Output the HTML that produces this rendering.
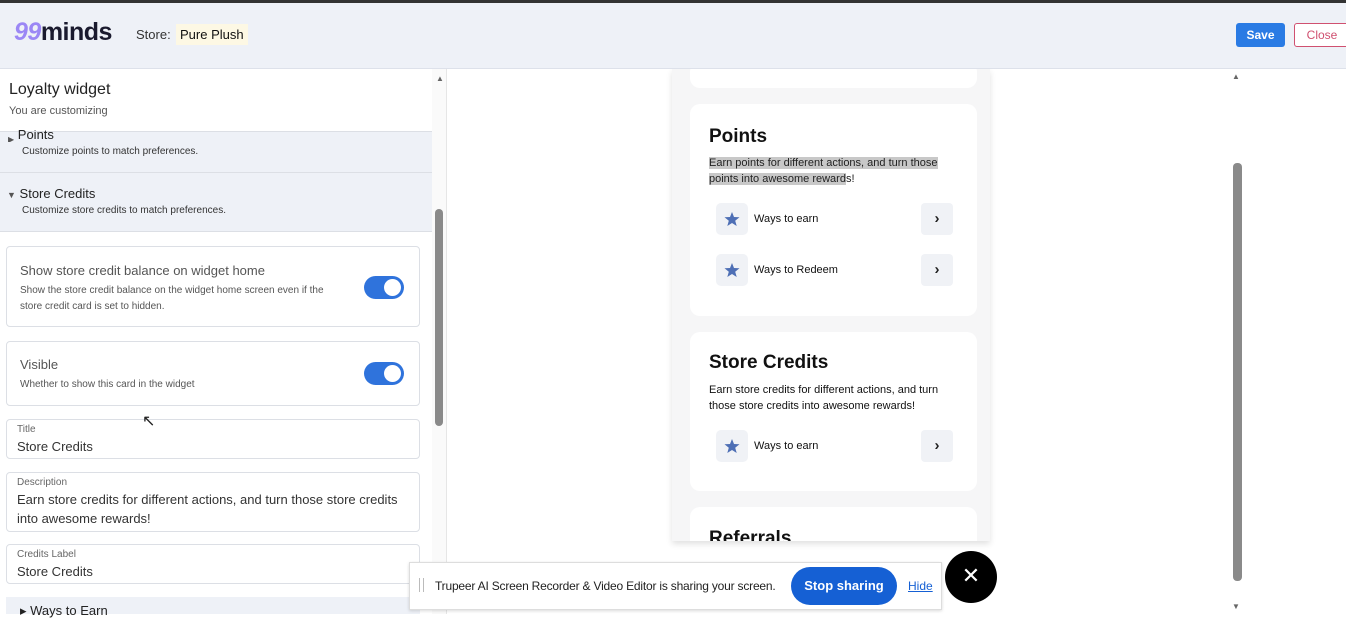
<!DOCTYPE html>
<html><head><meta charset="utf-8"><style>
*{box-sizing:border-box;margin:0;padding:0}
body{width:1346px;height:614px;overflow:hidden;background:#fff;font-family:"Liberation Sans",sans-serif;position:relative;color:#222}
.a{position:absolute}
.hdr{left:0;top:0;width:1346px;height:69px;background:#eef1f7;border-top:3px solid #333;border-bottom:1px solid #dde1ea}
.card{position:absolute;left:6px;width:414px;border:1px solid #dcdfe5;border-radius:4px;background:#fff}
.tog{position:absolute;width:40px;height:23px;border-radius:12px;background:#2f73dc}
.tog:after{content:"";position:absolute;right:3px;top:3px;width:17px;height:17px;border-radius:50%;background:#fff}
.lbl{font-size:10px;color:#666;position:absolute;left:10px}
.val{font-size:13px;color:#333;position:absolute;left:10px}
.wc{position:absolute;left:690px;width:287px;background:#fff;border-radius:10px}
.row{position:absolute;left:26px;width:237px;height:32px}
.ico{position:absolute;left:0;top:0;width:32px;height:32px;background:#f0f2f6;border-radius:5px}
.chev{position:absolute;right:0;top:0;width:32px;height:32px;background:#f0f2f6;border-radius:4px;font-size:15px;text-align:center;line-height:31px;font-weight:bold}
.rt{position:absolute;left:38px;top:10px;font-size:11px;color:#111}
</style></head><body>

<!-- widget preview -->
<div class="a" style="left:672px;top:69px;width:318px;height:472px;background:#f6f6f7;box-shadow:0 3px 6px rgba(0,0,0,.12)"></div>
<div class="wc" style="top:62px;height:26px"></div>
<div class="wc" style="top:104px;height:212px">
 <div class="a" style="left:19px;top:22px;font-size:19px;font-weight:bold;color:#111">Points</div>
 <div class="a" style="left:19px;top:51px;font-size:11px;line-height:16px;color:#222;width:240px"><span style="background:#c8c8c8">Earn points for different actions, and turn those points into awesome reward</span>s!</div>
 <div class="row" style="top:99px"><div class="ico"><svg width="32" height="32"><polygon points="16,9 18,14 23.5,14.3 19.2,17.7 20.7,23 16,20 11.3,23 12.8,17.7 8.5,14.3 14,14" fill="#4e6fb5"/></svg></div><div class="rt">Ways to earn</div><div class="chev">›</div></div>
 <div class="row" style="top:150px"><div class="ico"><svg width="32" height="32"><polygon points="16,9 18,14 23.5,14.3 19.2,17.7 20.7,23 16,20 11.3,23 12.8,17.7 8.5,14.3 14,14" fill="#4e6fb5"/></svg></div><div class="rt">Ways to Redeem</div><div class="chev">›</div></div>
</div>
<div class="wc" style="top:332px;height:159px">
 <div class="a" style="left:19px;top:20px;font-size:19px;font-weight:bold;color:#111">Store Credits</div>
 <div class="a" style="left:19px;top:50px;font-size:11px;line-height:16px;color:#111;width:240px">Earn store credits for different actions, and turn those store credits into awesome rewards!</div>
 <div class="row" style="top:98px"><div class="ico"><svg width="32" height="32"><polygon points="16,9 18,14 23.5,14.3 19.2,17.7 20.7,23 16,20 11.3,23 12.8,17.7 8.5,14.3 14,14" fill="#4e6fb5"/></svg></div><div class="rt">Ways to earn</div><div class="chev">›</div></div>
</div>
<div class="wc" style="top:507px;height:34px;border-radius:10px 10px 0 0;overflow:hidden"><div class="a" style="left:19px;top:21px;font-size:19px;font-weight:bold;color:#111">Referrals</div></div>

<div class="a hdr"></div>
<div class="a" style="left:14px;top:18px;font-size:25px;font-weight:bold;letter-spacing:-0.5px"><span style="color:#9b87f5;font-style:italic">99</span><span style="color:#1a1a2e">minds</span></div>
<div class="a" style="left:136px;top:27px;font-size:13px;color:#333">Store:</div>
<div class="a" style="left:176px;top:24px;padding:3px 4px;background:#fdf8e4;font-size:13px;color:#111">Pure Plush</div>
<div class="a" style="left:1236px;top:23px;width:49px;height:24px;background:#2a7be4;border-radius:3px;color:#fff;font-size:12px;font-weight:bold;text-align:center;line-height:24px">Save</div>
<div class="a" style="left:1294px;top:23px;width:56px;height:24px;border:1px solid #d05070;border-radius:3px;color:#d05070;font-size:12px;text-align:center;line-height:22px;background:#fff">Close</div>

<!-- left panel -->
<div class="a" style="left:0;top:69px;width:432px;height:545px;background:#fff"></div>
<div class="a" style="left:0;top:132px;width:432px;height:100px;background:#eef1f7"></div>
<div class="a" style="left:0;top:172px;width:432px;height:1px;background:#dcdfe5"></div>
<div class="a" style="left:0;top:231px;width:432px;height:1px;background:#dcdfe5"></div>
<div class="a" style="left:0;top:69px;width:432px;height:63px;background:#fff;border-bottom:1px solid #dcdfe5"></div>
<div class="a" style="left:9px;top:81px;font-size:16px;color:#222">Loyalty widget</div>
<div class="a" style="left:9px;top:105px;font-size:11px;color:#555">You are customizing</div>
<div class="a" style="left:8px;top:130px;height:12px;overflow:hidden;width:200px;font-size:13px;color:#222"><span style="font-size:8px;color:#555">▶</span> <span style="position:relative;top:-3px">Points</span></div>
<div class="a" style="left:22px;top:146px;font-size:10px;color:#333">Customize points to match preferences.</div>
<div class="a" style="left:7px;top:186px;font-size:13px;color:#222"><span style="font-size:9px;color:#555">▼</span> Store Credits</div>
<div class="a" style="left:22px;top:205px;font-size:10px;color:#333">Customize store credits to match preferences.</div>

<div class="card" style="top:246px;height:81px">
 <div class="a" style="left:13px;top:16px;font-size:13px;color:#555">Show store credit balance on widget home</div>
 <div class="a" style="left:13px;top:36px;font-size:10px;color:#555;line-height:16px;width:325px">Show the store credit balance on the widget home screen even if the store credit card is set to hidden.</div>
 <div class="tog" style="left:357px;top:29px"></div>
</div>
<div class="card" style="top:341px;height:65px">
 <div class="a" style="left:13px;top:15px;font-size:13px;color:#555">Visible</div>
 <div class="a" style="left:13px;top:37px;font-size:10px;color:#555">Whether to show this card in the widget</div>
 <div class="tog" style="left:357px;top:20px"></div>
</div>
<div class="card" style="top:419px;height:40px"><div class="lbl" style="top:4px">Title</div><div class="val" style="top:19px">Store Credits</div></div>
<div class="card" style="top:472px;height:60px"><div class="lbl" style="top:4px">Description</div><div class="val" style="top:17px;line-height:19px;width:390px">Earn store credits for different actions, and turn those store credits into awesome rewards!</div></div>
<div class="card" style="top:544px;height:40px"><div class="lbl" style="top:4px">Credits Label</div><div class="val" style="top:19px">Store Credits</div></div>
<div class="a" style="left:6px;top:597px;width:414px;height:17px;background:#eef1f7"></div>
<div class="a" style="left:20px;top:603px;font-size:13px;color:#222">▸ Ways to Earn</div>
<div class="a" style="left:142px;top:411px;font-size:16px">↖</div>

<!-- left scrollbar -->
<div class="a" style="left:432px;top:69px;width:14px;height:545px;background:#fafafa"></div>
<div class="a" style="left:436px;top:74px;font-size:8px;color:#666">▲</div>
<div class="a" style="left:435px;top:209px;width:8px;height:217px;background:#8a8a8a;border-radius:4px"></div>
<div class="a" style="left:446px;top:69px;width:1px;height:545px;background:#e6e6e6"></div>

<!-- right scrollbar -->
<div class="a" style="left:1232px;top:72px;font-size:8px;color:#666">▲</div>
<div class="a" style="left:1232px;top:602px;font-size:8px;color:#666">▼</div>
<div class="a" style="left:1233px;top:163px;width:9px;height:418px;background:#8a8a8a;border-radius:4px"></div>

<!-- sharing bar -->
<div class="a" style="left:409px;top:562px;width:533px;height:48px;background:#fff;border:1px solid #ddd;box-shadow:0 1px 3px rgba(0,0,0,.15)"></div>
<div class="a" style="left:419px;top:578px;height:14px;border-left:1px solid #bbb;border-right:1px solid #bbb;width:5px"></div>
<div class="a" style="left:435px;top:579px;font-size:12px;color:#222;letter-spacing:-0.2px">Trupeer AI Screen Recorder &amp; Video Editor is sharing your screen.</div>
<div class="a" style="left:791px;top:567px;width:106px;height:38px;background:#1560d4;border-radius:19px;color:#fff;font-size:13px;font-weight:bold;text-align:center;line-height:38px">Stop sharing</div>
<div class="a" style="left:908px;top:579px;font-size:12px;color:#1560d4;text-decoration:underline">Hide</div>
<div class="a" style="left:945px;top:551px;width:52px;height:52px;border-radius:50%;background:#000;color:#fff;font-size:22px;text-align:center;line-height:50px">✕</div>
</body></html>
